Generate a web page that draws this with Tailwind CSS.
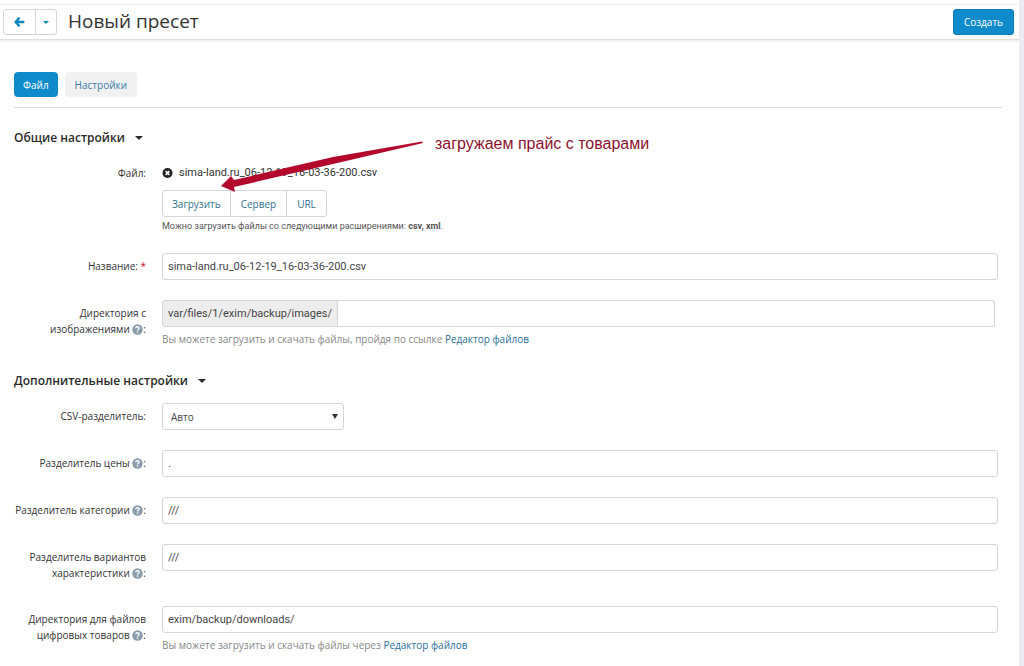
<!DOCTYPE html>
<html lang="ru">
<head>
<meta charset="utf-8">
<meta name="viewport" content="width=device-width, initial-scale=1">
<title>Новый пресет</title>
<script src="https://cdn.jsdelivr.net/npm/@tailwindcss/browser@4"></script>
</head>
<body class="min-h-screen overflow-x-hidden border-r-[5px] border-[#eaecf1] bg-white font-['Open_Sans','Noto_Sans',sans-serif] text-[10px] leading-4 text-[#333]">
<svg class="hidden" aria-hidden="true">
  <symbol id="help" viewBox="0 0 12 12"><circle cx="6" cy="6" r="5.7" fill="#8a9bab"/><path d="M4.1 4.7C4.2 2.4 7.9 2.4 7.8 4.6C7.8 5.8 6 5.8 6 7.2" fill="none" stroke="#fff" stroke-width="1.5"/><path d="M5.2 8h1.6v1.5H5.2z" fill="#fff"/></symbol>
  <symbol id="caret" viewBox="0 0 8 4"><path d="M0 0h8L4 4z" fill="currentColor"/></symbol>
</svg>

<header class="mt-1 flex h-9 items-center border-t border-b border-t-[#f0f0f0] border-b-[#dedede] pr-[5px] pl-[3px] shadow-[0_1px_3px_rgba(0,0,0,0.1)]">
  <div class="flex h-[26px] rounded-[3px] border border-[#d4d4d4] text-[#0d86c0]">
    <button type="button" aria-label="Назад" class="flex w-8 items-center justify-center border-r border-[#d4d4d4]">
      <svg class="h-[10px] w-[11px]" viewBox="0 0 11 10"><path d="M5.6 .7L1.5 5l4.1 4.3M1.8 5H10.3" fill="none" stroke="currentColor" stroke-width="2.3"/></svg>
    </button>
    <button type="button" aria-label="Меню" class="flex w-5 items-center justify-center"><svg class="h-[3px] w-[6px]"><use href="#caret"/></svg></button>
  </div>
  <h1 class="ml-[11px] pb-[2px] text-[19px] leading-6 text-[#333]">Новый пресет</h1>
  <button type="button" class="ml-auto h-[26px] rounded-[3px] border border-[#0b7cb8] bg-[#0f8bcb] px-[10px] text-white">Создать</button>
</header>

<main class="relative pr-[21px] pb-3">
  <nav class="mr-[-4px] ml-[14px] flex gap-[7px] border-b border-[#dedede] pt-8 pb-[10px]">
    <button type="button" class="h-[25px] rounded-[4px] bg-[#0f8bcb] px-[9px] text-white">Файл</button>
    <button type="button" class="h-[25px] rounded-[4px] bg-[#f1f1f1] px-[10px] text-[#3a7ca8]">Настройки</button>
  </nav>

  <section>
    <h2 class="mt-5 mb-3 ml-[14px] flex h-5 items-center gap-[10px] text-[12px] font-semibold text-[#2b2b2b]">Общие настройки <svg class="h-1 w-2"><use href="#caret"/></svg></h2>
    <div class="grid grid-cols-[146px_1fr] gap-x-4 gap-y-5">
      <div class="py-[5px] text-right">Файл:</div>
      <div>
        <div class="flex h-[30px] items-start gap-[6px] pt-[5px] font-[Roboto,sans-serif] text-[11px]">
          <button type="button" aria-label="Удалить файл" class="flex h-4 items-center"><svg class="h-[10px] w-[11px]" viewBox="0 0 11 11"><circle cx="5.5" cy="5.5" r="5.5" fill="#222"/><path d="M3.5 3.5l4 4m0-4l-4 4" stroke="#fff" stroke-width="1.8"/></svg></button>
          <span>sima-land.ru_06-12-19_16-03-36-200.csv</span>
        </div>
        <div class="flex h-[27px] w-max divide-x divide-[#d4d4d4] rounded-[3px] border border-[#d4d4d4] text-[#31718f]">
          <button type="button" class="px-[9px]">Загрузить</button>
          <button type="button" class="px-[10px]">Сервер</button>
          <button type="button" class="px-[10px]">URL</button>
        </div>
        <p class="mt-[2px] font-[Roboto,sans-serif] text-[9px] leading-[14px] text-[#555]">Можно загрузить файлы со следующими расширениями: <b>csv, xml</b>.</p>
      </div>

      <label for="name" class="py-[5px] text-right">Название: <span class="text-[#c8102e]">*</span></label>
      <input id="name" value="sima-land.ru_06-12-19_16-03-36-200.csv" class="h-[27px] w-full rounded-[3px] border border-[#d4d4d4] px-[5px] font-[Roboto,sans-serif] text-[11px] text-[#444]">

      <label for="dir" class="py-[5px] text-right">Директория с<br>изображениями <svg class="inline h-[11px] w-[11px] align-[-2px]"><use href="#help"/></svg>:</label>
      <div>
        <div class="mr-[3px] flex h-[27px]">
          <span class="flex items-center rounded-l-[3px] border border-[#d4d4d4] bg-[#ededed] px-[5px] font-[Roboto,sans-serif] text-[11px] text-[#444]">var/files/1/exim/backup/images/</span>
          <input id="dir" class="min-w-0 flex-1 rounded-r-[3px] border border-l-0 border-[#d4d4d4] px-[5px]">
        </div>
        <p class="mt-1 text-[#888]">Вы можете загрузить и скачать файлы, пройдя по ссылке <a href="#" class="text-[#2a6f97]">Редактор файлов</a></p>
      </div>
    </div>
  </section>

  <section>
    <h2 class="mt-6 mb-3 ml-[14px] flex h-5 items-center gap-[10px] text-[12px] font-semibold text-[#2b2b2b]">Дополнительные настройки <svg class="h-1 w-2"><use href="#caret"/></svg></h2>
    <div class="grid grid-cols-[146px_1fr] gap-x-4 gap-y-5">
      <label for="csv" class="py-[5px] text-right">CSV-разделитель:</label>
      <div class="relative h-[27px] w-[182px]">
        <select id="csv" class="h-full w-full appearance-none rounded-[3px] border border-[#d4d4d4] px-2 text-[#444]"><option>Авто</option></select>
        <svg class="pointer-events-none absolute top-[11px] right-[6px] h-[5px] w-[6px] text-[#333]" viewBox="0 0 6 5"><path d="M0 0h6L3 5z" fill="currentColor"/></svg>
      </div>

      <label for="price" class="py-[5px] text-right">Разделитель цены <svg class="inline h-[11px] w-[11px] align-[-2px]"><use href="#help"/></svg>:</label>
      <input id="price" value="." class="h-[27px] w-full rounded-[3px] border border-[#d4d4d4] px-[5px] font-[Roboto,sans-serif] text-[11px] text-[#444]">

      <label for="cat" class="py-[5px] text-right">Разделитель категории <svg class="inline h-[11px] w-[11px] align-[-2px]"><use href="#help"/></svg>:</label>
      <input id="cat" value="///" class="h-[27px] w-full rounded-[3px] border border-[#d4d4d4] px-[5px] font-[Roboto,sans-serif] text-[11px] text-[#444]">

      <label for="variants" class="py-[5px] text-right">Разделитель вариантов<br>характеристики <svg class="inline h-[11px] w-[11px] align-[-2px]"><use href="#help"/></svg>:</label>
      <input id="variants" value="///" class="h-[27px] w-full rounded-[3px] border border-[#d4d4d4] px-[5px] font-[Roboto,sans-serif] text-[11px] text-[#444]">

      <label for="downloads" class="py-[5px] text-right">Директория для файлов<br>цифровых товаров <svg class="inline h-[11px] w-[11px] align-[-2px]"><use href="#help"/></svg>:</label>
      <div>
        <input id="downloads" value="exim/backup/downloads/" class="block h-[27px] w-full rounded-[3px] border border-[#d4d4d4] px-[5px] font-[Roboto,sans-serif] text-[11px] text-[#444]">
        <p class="mt-1 text-[#888]">Вы можете загрузить и скачать файлы через <a href="#" class="text-[#2a6f97]">Редактор файлов</a></p>
      </div>
    </div>
  </section>

  <div class="pointer-events-none absolute top-[96px] left-[221px] flex items-start gap-[11px] text-[#8c1230]">
    <svg class="mt-[5px] h-[52px] w-[203px]" viewBox="0 0 203 52"><path d="M0 45L10 35L13 39L112 16L201 .5L202 2L112 23L13 46L14 51Z" fill="#b3082c"/></svg>
    <span class="font-['Liberation_Sans',sans-serif] text-[16px]">загружаем прайс с товарами</span>
  </div>
</main>
</body>
</html>
